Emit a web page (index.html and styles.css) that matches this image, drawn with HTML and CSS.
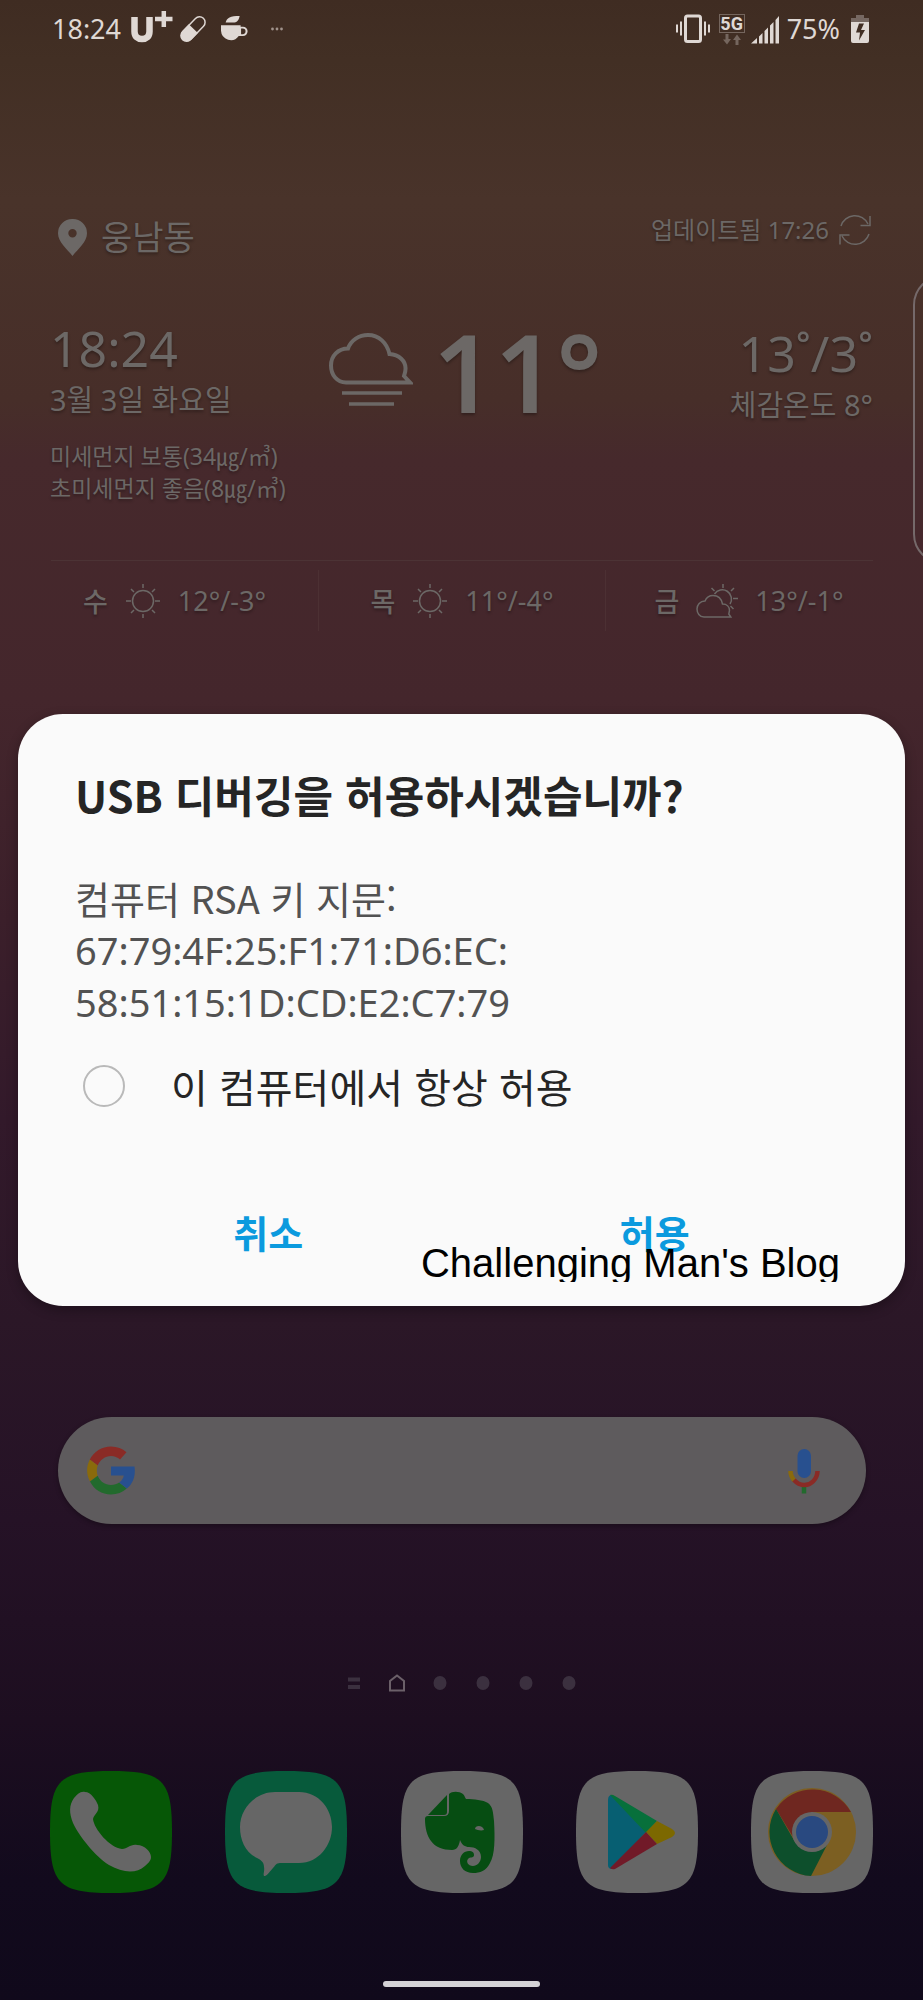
FILE: index.html
```html
<!DOCTYPE html>
<html lang="ko">
<head>
<meta charset="utf-8">
<meta name="viewport" content="width=device-width, initial-scale=1">
<title>USB 디버깅</title>
<link rel="stylesheet" href="styles.css">
</head>
<body>
<div class="screen">
  <header class="status">
    <div class="status-side">
      <span class="status-text">18:24</span>
      <svg class="ic-uplus" viewBox="0 0 42 40" aria-label="U+"><path d="M3.500 8v14.500c0 5 3 7.500 7.500 7.500s7.500-2.500 7.500-7.500V8" fill="none" stroke="currentColor" stroke-width="6.500"/><path d="M24 10h17.500M32.800 2v16" fill="none" stroke="currentColor" stroke-width="4.500"/></svg>
      <svg class="ic-pill" viewBox="0 0 30 30"><g transform="rotate(44 15 15)"><rect x="9" y="-1" width="12" height="31" rx="6" fill="none" stroke="currentColor" stroke-width="1.600"/><path d="M8.200 14.500h13.600V25a6.800 6.800 0 0 1-13.600 0z" fill="currentColor"/></g></svg>
      <svg class="ic-cup" viewBox="0 0 30 30"><path d="M0 11h21v1.500h2.500a4.500 4.500 0 0 1 0 10H19A10.500 10.500 0 0 1 0 17zM21.500 14.500v6h1.800a3 3 0 0 0 0-6z" fill="currentColor" fill-rule="evenodd"/><path d="M5 8c1-5 5-7 15-7-1 5-3 7-7 7z" fill="currentColor"/></svg>
      <svg class="ic-more" viewBox="0 0 12 4"><circle cx="1.500" cy="2" r="1.400"/><circle cx="6" cy="2" r="1.400"/><circle cx="10.500" cy="2" r="1.400"/></svg>
    </div>
    <div class="status-side">
      <svg class="ic-vibrate" viewBox="0 0 34 30"><rect x="9.500" y="2" width="15" height="25.500" rx="2" fill="none" stroke="currentColor" stroke-width="3"/><path d="M1 10.500v8M5 7.500v14M29 7.500v14M33 10.500v8" stroke="currentColor" stroke-width="2"/></svg>
      <span class="net"><span class="net-label">5G</span><svg class="ic-arrows" viewBox="0 0 20 11"><path d="M3.500 0h3v5H9l-4 5.500L1 5.500h2.500zM13.500 11h3V6H19L15 .5 11 6h2.500z" fill="currentColor"/></svg></span>
      <svg class="ic-signal" viewBox="0 0 28 29"><path d="M0 28.500l6-5.500v5.500zM8 21.500l3.500-3.500v10.500H8zM13.500 16l3.500-3.500v16h-3.500zM19 10.500l3.500-3.500v21.500H19zM24.500 5L28 1v27.500h-3.500z" fill="currentColor"/></svg>
      <span class="status-text">75%</span>
      <svg class="ic-battery" viewBox="0 0 18 29"><path d="M5 0h8v3h5v4H0V3h5z" fill="#766862"/><path d="M0 7h18v19a2 2 0 0 1-2 2H2a2 2 0 0 1-2-2zM8 8.500L5 17.500h4L8 25.500l6-10.500h-4l3-6.500z" fill="currentColor" fill-rule="evenodd"/></svg>
    </div>
  </header>

  <main class="home">
    <section class="weather">
      <div class="place-row">
        <div class="place">
          <svg class="ic-pin" viewBox="0 0 29 37"><path d="M14.500 0A14.300 14.300 0 0 0 0 14.300C0 23 9 30 14.500 37 20 30 29 23 29 14.300A14.300 14.300 0 0 0 14.500 0zm0 10a4.200 4.200 0 1 1 0 8.400 4.200 4.200 0 0 1 0-8.400z" fill="currentColor" fill-rule="evenodd"/></svg>
          <span>웅남동</span>
        </div>
        <div class="updated">
          <span>업데이트됨 17:26</span>
          <svg class="ic-refresh" viewBox="0 0 32 32" fill="none" stroke="currentColor" stroke-width="1.500"><path d="M2 12A14.500 14.500 0 0 1 29 10M31 2v9.500h-9.500M30 20A14.500 14.500 0 0 1 3 22M1 30.500V21h9.500"/></svg>
        </div>
      </div>
      <div class="now">
        <div class="clock">
          <div class="big">18:24</div>
          <div class="mid">3월 3일 화요일</div>
          <div class="dust">미세먼지 보통(34㎍/㎥)<br>초미세먼지 좋음(8㎍/㎥)</div>
        </div>
        <div class="current">
          <svg class="ic-cloud" viewBox="0 0 84 74" fill="none" stroke="currentColor"><path d="M17 49.500C8 49.500 2 42 2 32.500S9 15.500 19 15.500C22 7 30 2 39 2c11 0 19 8 21.500 19C70 21.500 77 28 76.500 36c0 3-1 5-1.500 7l6 6.500z" stroke-width="4"/><path d="M13 60h60M20 71h45" stroke-width="3.500"/></svg>
          <span class="degree">11°</span>
        </div>
        <div class="range">
          <div class="big">13˚/3˚</div>
          <div class="mid">체감온도 8°</div>
        </div>
      </div>
      <ul class="forecast">
        <li><span class="day">수</span><svg class="ic-sun" viewBox="0 0 36 36" fill="none" stroke="currentColor" stroke-width="1.500"><circle cx="18" cy="18" r="10.500"/><path d="M18 1v4M18 31v4M1 18h5M30 18h5M6 6l3 3M27 27l3 3M6 30l3-3M27 9l3-3"/></svg><span>12°/-3°</span></li>
        <li><span class="day">목</span><svg class="ic-sun" viewBox="0 0 36 36" fill="none" stroke="currentColor" stroke-width="1.500"><circle cx="18" cy="18" r="10.500"/><path d="M18 1v4M18 31v4M1 18h5M30 18h5M6 6l3 3M27 27l3 3M6 30l3-3M27 9l3-3"/></svg><span>11°/-4°</span></li>
        <li><span class="day">금</span><svg class="ic-partly" viewBox="0 0 42 36" fill="none" stroke="currentColor" stroke-width="1.500"><path d="M8 34C3.500 34 1 30 1 26s3-8 8-8c1.500-3.500 4.500-5.500 8-5.500 5 0 8.500 3.500 9.500 8.500 4.500 0 7 3 7 6.500l-.7 3.500 2 3zM18.500 11a9 9 0 1 1 15.500 10M27 1v4M15.500 5l3 3M38 5l-3 3M37 15.500h5M34.500 23l3 3"/></svg><span>13°/-1°</span></li>
      </ul>
    </section>

    <button class="search" aria-label="Google 검색">
      <svg class="ic-google" viewBox="0 0 48 48"><path d="M24 0c6 0 11.500 2.200 15.500 5.800L33 13c-2.400-2-5.500-3.500-9-3.500-6 0-11 4-13.300 9.500L2.800 13C6.800 5.200 14.800 0 24 0z" fill="#8a2b26"/><path d="M2.800 13l7.900 6c-1.200 3-1.200 7 0 10.300L3 35C-.800 28-.800 20 2.800 13z" fill="#8a6a0c"/><path d="M3 35l7.700-5.700C13 35 18 38.500 24 38.500c3.200 0 6-.8 8.200-2.400l7.600 6C35.600 46 30 48 24 48 14.800 48 7 43 3 35z" fill="#226a2d"/><path d="M24 20h23.500c1.300 9-1.300 17-7.700 22.100l-7.600-6c2.400-1.600 4-4.100 4.600-7.100H24z" fill="#28508f"/></svg>
      <svg class="ic-mic" viewBox="0 0 32 46"><rect x="9.500" y="1" width="13.500" height="29" rx="6.700" fill="#28508f"/><path d="M16 36v9.500" stroke="#226a2d" stroke-width="4.500"/><path d="M2.500 23c0 4 1.500 7 4 9.500" fill="none" stroke="#8a6a0c" stroke-width="4.500"/><path d="M6 32c6 6.500 14 6.500 19 1.500 3-3 4.500-6 4.500-10.500" fill="none" stroke="#8a2b26" stroke-width="4.500"/></svg>
    </button>

    <nav class="pages" aria-label="홈 화면 페이지">
      <svg viewBox="0 0 16 18"><path d="M2 5.500h12M2 13h12" stroke="#3b303f" stroke-width="4"/></svg>
      <svg viewBox="0 0 16 18"><path d="M1 16.500V7L8 1.500 15 7v9.500z" fill="none" stroke="#6b6069" stroke-width="2"/></svg>
      <svg viewBox="0 0 16 18"><ellipse cx="8" cy="9" rx="6.500" ry="7" fill="#3b303f"/></svg>
      <svg viewBox="0 0 16 18"><ellipse cx="8" cy="9" rx="6.500" ry="7" fill="#3b303f"/></svg>
      <svg viewBox="0 0 16 18"><ellipse cx="8" cy="9" rx="6.500" ry="7" fill="#3b303f"/></svg>
      <svg viewBox="0 0 16 18"><ellipse cx="8" cy="9" rx="6.500" ry="7" fill="#3b303f"/></svg>
    </nav>

    <nav class="dock">
      <a href="#phone" aria-label="전화"><svg viewBox="0 0 122 122"><path class="green" d="M61 0C113 0 122 9 122 61S113 122 61 122 0 113 0 61 9 0 61 0z"/><path d="M24 27c3-3 6-7 11-6 6 0 11 8 13 13 2 7-4 9-5 14 1 10 17 29 29 30 6 0 8-5 15-4 8 0 14 7 14 12 0 4-3 6-6 9-9 8-22 7-36-1-14-9-30-29-36-42-4-10-4-18 1-25z" fill="#666"/></svg></a>
      <a href="#messages" aria-label="메시지"><svg viewBox="0 0 122 122"><path class="teal" d="M61 0C113 0 122 9 122 61S113 122 61 122 0 113 0 61 9 0 61 0z"/><path d="M50 21h24c20 0 33 17 33 35S94 92 74 92H55c-4 0-5 3-7 5-3 3-5 7-8 8-3 0 0-5-1-9 0-5-3-7-7-9C20 81 15 69 15 56c0-18 15-35 35-35z" fill="#666"/></svg></a>
      <a href="#evernote" aria-label="Evernote"><svg viewBox="0 0 122 122"><path class="gray" d="M61 0C113 0 122 9 122 61S113 122 61 122 0 113 0 61 9 0 61 0z"/><path d="M27 44L46 24V41q0 3-3 3z" fill="#064d12"/><path d="M48 23c3-3 10-3 14 0 2 2 2 4 3 5 8 0 17 1 22 4 5 4 5 9 6 18 1 17 1 34-4 42-4 8-10 10-17 10-8 0-13-5-13-12 0-6 4-10 9-10 3 0 5 1 5 4s-3 2-5 3c-4 3-1 8 4 8 4 0 8-4 8-9 0-7-6-10-12-10-4 0-7-2-9-7-1 6-3 10-8 10-9 0-17-3-21-9-4-5-6-13-6-22q0-3 3-3h16q5 0 5-5z" fill="#064d12"/><path d="M74 58c0-4 8-4 9 1-3 1-7 0-9-1z" fill="#666"/></svg></a>
      <a href="#play" aria-label="Play 스토어"><svg viewBox="0 0 122 122"><path class="gray" d="M61 0C113 0 122 9 122 61S113 122 61 122 0 113 0 61 9 0 61 0z"/><path d="M36 24L70 61 36 98q-4 0-4-4V29q0-5 4-5z" fill="#075f72"/><path d="M34 24q2-1 5 1L81 50 70 62z" fill="#07703b"/><path d="M81 50l15 8q6 4 0 8L81 73 70 61z" fill="#7c6800"/><path d="M70 61l11 12-42 25q-3 1-5-1z" fill="#711a28"/></svg></a>
      <a href="#chrome" aria-label="Chrome"><svg viewBox="0 0 122 122"><path class="gray" d="M61 0C113 0 122 9 122 61S113 122 61 122 0 113 0 61 9 0 61 0z"/><circle cx="61" cy="61" r="44" fill="#7c5f22"/><path d="M25 38A44 44 0 0 1 100 41H61L42 66z" fill="#6f2720"/><path d="M25 38L44 71q7 10 20 9l12-6L60 105A44 44 0 0 1 25 38z" fill="#0d4f2c"/><circle cx="61" cy="61" r="20" fill="#666"/><circle cx="61" cy="61" r="16" fill="#294980"/></svg></a>
    </nav>
    <div class="gesture"></div>
  </main>

  <div class="edge-handle"></div>

  <div class="dialog-layer">
    <form class="dialog" role="dialog" aria-labelledby="dialog-title">
      <h1 id="dialog-title">USB 디버깅을 허용하시겠습니까?</h1>
      <p>컴퓨터 RSA 키 지문: <span class="key">67:79:4F:25:F1:71:D6:EC:<br>58:51:15:1D:CD:E2:C7:79</span></p>
      <label class="always"><input type="checkbox"><span>이 컴퓨터에서 항상 허용</span></label>
      <div class="actions">
        <button type="button">취소</button>
        <button type="button">허용</button>
      </div>
      <div class="watermark">Challenging Man's Blog</div>
    </form>
  </div>
</div>
</body>
</html>
```
FILE: styles.css
```css
* {
  box-sizing: border-box;
}

body {
  margin: 0;
  background: #10091b;
  font-family: "Noto Sans", "Noto Sans CJK KR", sans-serif;
}

svg {
  display: block;
  flex: none;
}

.screen {
  position: relative;
  min-height: 100vh;
  overflow: hidden;
  background: linear-gradient(180deg, #3f2c22 0, #422f24 3%, #49332a 10%, #472e29 20%, #46292c 23%, #44262c 35%, #3b1f2a 46%, #32192a 56%, #2b1727 66%, #251226 76%, #1d0e20 86%, #120a1d 94%, #10091b 100%);
}

/* Status bar */

.status {
  display: flex;
  justify-content: space-between;
  height: 58px;
  padding: 0 54px 0 52px;
  align-items: center;
  color: #dfd8d4;
}

.status-side {
  display: flex;
  align-items: center;
}

.status-text {
  font-size: 27px;
  line-height: 40px;
}

.ic-uplus { width: 42px; height: 40px; margin: 0 6px 0 10px; }
.ic-pill { width: 28px; height: 28px; margin-right: 14px; }
.ic-cup { width: 28px; height: 28px; margin-right: 22px; }
.ic-more { width: 12px; height: 4px; fill: #a0938c; }
.ic-vibrate { width: 34px; height: 30px; margin-right: 9px; }
.ic-arrows { width: 20px; height: 11px; color: #75665e; }
.ic-signal { width: 28px; height: 29px; margin: 0 8px 0 6px; }
.ic-battery { width: 18px; height: 29px; margin-left: 11px; }

.net {
  display: flex;
  flex-direction: column;
  align-items: center;
  gap: 1px;
}

.net-label {
  width: 26px;
  height: 19px;
  border: 1px solid #75665e;
  font: bold 18px/17px Roboto, sans-serif;
  text-align: center;
}

/* Weather widget */

.weather {
  color: #6c6866;
  text-shadow: 0 2px 3px rgba(0, 0, 0, 0.3);
}

.place-row {
  display: flex;
  justify-content: space-between;
  align-items: center;
  height: 50px;
  margin: 154px 52px 0 58px;
}

.place {
  display: flex;
  align-items: center;
  gap: 14px;
  font-size: 34px;
  line-height: 50px;
}

.updated {
  display: flex;
  align-items: center;
  align-self: flex-start;
  gap: 10px;
  font-size: 24px;
  line-height: 36px;
}

.ic-pin { width: 29px; height: 37px; }
.ic-refresh { width: 32px; height: 32px; }

.now {
  display: grid;
  grid-template-columns: 1fr auto 1fr;
  height: 238px;
  margin: 60px 50px 0;
}

.big {
  font-size: 50px;
  line-height: 52px;
}

.mid {
  margin-top: 8px;
  font-size: 29px;
  line-height: 36px;
}

.dust {
  margin-top: 22px;
  font-size: 23px;
  line-height: 32px;
}

.current {
  display: flex;
  align-items: flex-start;
  gap: 20px;
  margin-left: 8px;
}

.ic-cloud { width: 84px; height: 74px; margin-top: 11px; }

.degree {
  font-size: 108px;
  font-weight: 600;
  line-height: 100px;
}

.range {
  padding-top: 5px;
  text-align: right;
}

.forecast {
  display: grid;
  grid-template-columns: repeat(3, 1fr);
  margin: 0 31px;
  padding: 10px 0 0;
  list-style: none;
  background: linear-gradient(#4c3335, #4c3335) 50% 0 / 822px 1px no-repeat;
}

.forecast li {
  display: flex;
  justify-content: center;
  align-items: center;
  gap: 17px;
  height: 61px;
  font-size: 27px;
}

.forecast li + li {
  border-left: 1px solid #4c3033;
}

.day {
  font-weight: 500;
}

.ic-sun { width: 36px; height: 36px; }
.ic-partly { width: 42px; height: 36px; }

/* Lower part of the home screen */

.search {
  display: flex;
  justify-content: space-between;
  align-items: center;
  width: calc(100% - 115px);
  height: 107px;
  margin: 786px auto 0;
  padding: 0 46px 0 29px;
  border: 0;
  border-radius: 54px;
  background: #5e5b5d;
  box-shadow: 0 2px 5px rgba(0, 0, 0, 0.3);
}

.ic-google { width: 48px; height: 49px; }
.ic-mic { width: 32px; height: 46px; }

.pages {
  display: flex;
  justify-content: center;
  gap: 27px;
  margin-top: 150px;
}

.pages svg { width: 16px; height: 18px; }

.dock {
  display: flex;
  justify-content: space-between;
  margin: 79px 50px 0;
}

.dock svg { width: 122px; height: 122px; }

.green { fill: #065706; }
.teal { fill: #075a3b; }
.gray { fill: #666; }

.gesture {
  width: 157px;
  height: 6px;
  margin: 88px auto 0;
  border-radius: 3px;
  background: #d4d2d6;
}

.edge-handle {
  position: absolute;
  top: 275px;
  right: -50px;
  width: 60px;
  height: 289px;
  border: 2px solid #75696a;
  border-radius: 40px;
}

/* Dialog */

.dialog-layer {
  position: absolute;
  inset: 714px 18px auto;
}

.dialog {
  position: relative;
  padding: 50px 57px 34px;
  border-radius: 45px;
  background: #fafafa;
  box-shadow: 0 4px 12px rgba(0, 0, 0, 0.3);
  color: #252525;
  font-family: "Noto Sans CJK KR", sans-serif;
}

.dialog h1 {
  margin: 0;
  font-size: 43px;
  font-weight: 700;
  line-height: 60px;
}

.dialog p {
  margin: 48px 0 0;
  color: #525252;
  font-size: 38px;
  line-height: 52px;
}

.key {
  display: block;
  font-family: "Noto Sans", sans-serif;
}

.always {
  display: flex;
  align-items: center;
  gap: 46px;
  margin-top: 30px;
  padding-left: 8px;
  font-size: 40px;
  line-height: 56px;
}

.always input {
  width: 42px;
  height: 42px;
  margin: 0;
  appearance: none;
  border: 2px solid #b9b9b9;
  border-radius: 50%;
}

.actions {
  display: grid;
  grid-template-columns: 1fr 1fr;
  margin-top: 78px;
}

.actions button {
  padding: 0;
  border: 0;
  background: none;
  color: #0b9ade;
  font: 700 38px/80px "Noto Sans CJK KR", sans-serif;
}

.watermark {
  position: absolute;
  right: 65px;
  bottom: 24px;
  height: 37px;
  overflow: hidden;
  color: #000;
  font: 40px/36px "Liberation Sans", sans-serif;
}
```
